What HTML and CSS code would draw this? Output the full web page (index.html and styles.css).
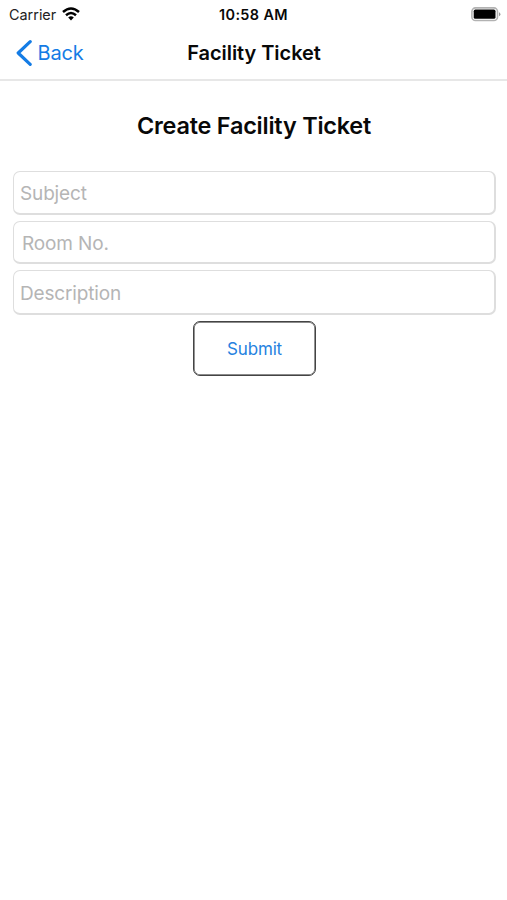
FILE: index.html
```html
<!DOCTYPE html>
<html lang="en">
<head>
<meta charset="utf-8">
<title>Facility Ticket</title>
<link rel="stylesheet" href="styles.css">
</head>
<body>
<header class="header">
  <div class="status">
    <div class="network"><span class="carrier">Carrier</span>
      <svg class="wifi" width="18" height="14" viewBox="0 0 18 14" fill="none" stroke="#000" stroke-width="2.5"><path d="M1 5Q9-2 17 5M4 8.2Q9 3.8 14 8.2"/><path d="M6.2 10.4Q9 8.2 11.8 10.4L9 13.4Z" fill="#000" stroke="none"/></svg>
    </div>
    <span class="time">10:58 AM</span>
    <svg class="battery" width="30" height="15" viewBox="0 0 30 15"><rect x=".9" y=".9" width="25.6" height="12.6" rx="3.6" fill="#fff" stroke="#b2b2b2" stroke-width="1.6"/><rect x="2.7" y="2.6" width="21.8" height="9.2" rx="1.6" fill="#000"/><path d="M28 5.2Q29.4 5.6 29.4 7.2T28 9.2Z" fill="#999"/></svg>
  </div>
  <nav class="nav">
    <a class="back"><svg width="17" height="28" viewBox="0 0 17 28" fill="none" stroke="#147ce5" stroke-width="3.2" stroke-linecap="round" stroke-linejoin="round"><path d="M15.2 2.7 3.2 14 15.2 25.3"/></svg><span class="back-label">Back</span></a>
    <span class="nav-title">Facility Ticket</span>
    <span></span>
  </nav>
</header>
<main class="form">
  <h1 class="title">Create Facility Ticket</h1>
  <div class="field subject"><span>Subject</span></div>
  <div class="field room"><span>Room No.</span></div>
  <div class="field description"><span>Description</span></div>
  <button class="submit"><span>Submit</span></button>
</main>
</body>
</html>
```
FILE: styles.css
```css
* { box-sizing: border-box; }
body { margin: 0; min-height: 900px; background: #fff; color: #080808; font-family: Inter, "Liberation Sans", sans-serif; }
.header { height: 81px; border-bottom: 2px solid #e7e7e7; }
.status { height: 28px; display: grid; grid-template-columns: 1fr auto 1fr; align-items: center; padding: 0 6px 0 9px; }
.network { display: flex; align-items: center; gap: 6px; }
.carrier { font-size: 14.4px; line-height: 29px; color: #222; }
.wifi { display: block; margin-bottom: 2px; }
.time { margin-right: 3px; font-size: 14.4px; font-weight: 600; line-height: 29px; letter-spacing: .4px; }
.battery { justify-self: end; }
.nav { height: 50px; display: grid; grid-template-columns: 1fr auto 1fr; align-items: center; padding: 0 14px 0 15px; }
.back { display: flex; align-items: center; gap: 5.5px; color: #147ce5; }
.back-label { font-size: 20px; letter-spacing: -.2px; }
.nav-title { font-size: 20px; font-weight: 600; letter-spacing: -.05px; }
.form { display: flex; flex-direction: column; padding: 0 11px 0 13px; }
.title { margin: 30px 1px 31px 0; font-size: 23.4px; font-weight: 600; line-height: 29px; letter-spacing: -.2px; text-align: center; }
.field { display: flex; align-items: center; height: 44px; padding: 2px 6px 0; border: 1px solid #dedede; border-width: 1px 2px 2px 1px; border-radius: 7px; color: #b5b5b5; font-size: 19px; letter-spacing: -.15px; }
.room { height: 43px; margin: 6px 0 6px; padding-left: 8px; }
.description { height: 45px; }
.submit { align-self: center; width: 123px; height: 55px; margin-top: 6px; padding: 0; border: 1px solid #444; box-shadow: inset 0 0 0 .7px #666; border-radius: 7px; background: #fff; color: #2682df; font-family: inherit; font-size: 17px; letter-spacing: -.15px; }
```
